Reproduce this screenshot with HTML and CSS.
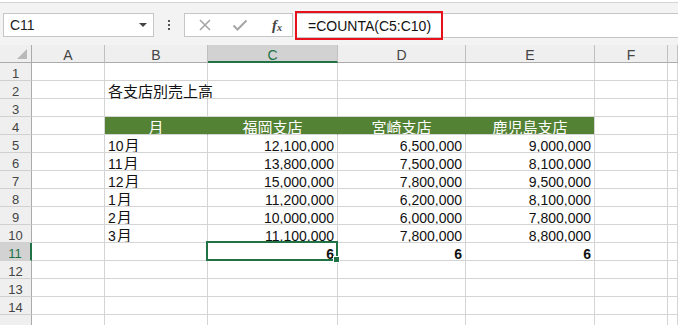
FILE: index.html
```html
<!DOCTYPE html>
<html lang="ja">
<head>
  <meta charset="UTF-8" />
  <title>COUNTA</title>
  <link rel="stylesheet" href="styles.css">
</head>
<body>
  <div class="formula-bar">
    <div class="name-box">
      <span>C11</span>
      <span class="caret"></span>
    </div>
    <div class="dots"><i></i><i></i><i></i></div>
    <div class="fx-buttons">
      <svg width="14" height="14" viewBox="0 0 14 14"><path d="M2 2 L12 12 M12 2 L2 12" stroke="#a6a6a6" stroke-width="1.6" fill="none"/></svg>
      <svg width="16" height="14" viewBox="0 0 16 14"><path d="M1.5 7.5 L5.5 11.5 L14.5 2.5" stroke="#a6a6a6" stroke-width="2" fill="none"/></svg>
      <span class="fx">f<sub>x</sub></span>
    </div>
    <div class="formula-input">
      <span>=COUNTA(C5:C10)</span>
      <div class="highlight"></div>
    </div>
  </div>

  <div class="sheet">
    <div class="corner"><span></span></div>
    <div class="col-head">A</div>
    <div class="col-head">B</div>
    <div class="col-head active">C</div>
    <div class="col-head">D</div>
    <div class="col-head">E</div>
    <div class="col-head">F</div>
    <div class="col-head"></div>

    <div class="row-head">1</div><div class="cell"></div><div class="cell"></div><div class="cell"></div><div class="cell"></div><div class="cell"></div><div class="cell"></div><div class="cell"></div>
    <div class="row-head">2</div><div class="cell"></div><div class="cell title">各支店別売上高</div><div class="cell"></div><div class="cell"></div><div class="cell"></div><div class="cell"></div><div class="cell"></div>
    <div class="row-head">3</div><div class="cell"></div><div class="cell"></div><div class="cell"></div><div class="cell"></div><div class="cell"></div><div class="cell"></div><div class="cell"></div>
    <div class="row-head">4</div><div class="cell"></div><div class="cell head">月</div><div class="cell head">福岡支店</div><div class="cell head">宮崎支店</div><div class="cell head last">鹿児島支店</div><div class="cell"></div><div class="cell"></div>
    <div class="row-head">5</div><div class="cell"></div><div class="cell">10<span class="jp">月</span></div><div class="cell num">12,100,000</div><div class="cell num">6,500,000</div><div class="cell num">9,000,000</div><div class="cell"></div><div class="cell"></div>
    <div class="row-head">6</div><div class="cell"></div><div class="cell">11<span class="jp">月</span></div><div class="cell num">13,800,000</div><div class="cell num">7,500,000</div><div class="cell num">8,100,000</div><div class="cell"></div><div class="cell"></div>
    <div class="row-head">7</div><div class="cell"></div><div class="cell">12<span class="jp">月</span></div><div class="cell num">15,000,000</div><div class="cell num">7,800,000</div><div class="cell num">9,500,000</div><div class="cell"></div><div class="cell"></div>
    <div class="row-head">8</div><div class="cell"></div><div class="cell">1<span class="jp">月</span></div><div class="cell num">11,200,000</div><div class="cell num">6,200,000</div><div class="cell num">8,100,000</div><div class="cell"></div><div class="cell"></div>
    <div class="row-head">9</div><div class="cell"></div><div class="cell">2<span class="jp">月</span></div><div class="cell num">10,000,000</div><div class="cell num">6,000,000</div><div class="cell num">7,800,000</div><div class="cell"></div><div class="cell"></div>
    <div class="row-head">10</div><div class="cell"></div><div class="cell">3<span class="jp">月</span></div><div class="cell num">11,100,000</div><div class="cell num">7,800,000</div><div class="cell num">8,800,000</div><div class="cell"></div><div class="cell"></div>
    <div class="row-head active">11</div><div class="cell"></div><div class="cell"></div><div class="cell num bold selected">6</div><div class="cell num bold">6</div><div class="cell num bold">6</div><div class="cell"></div><div class="cell"></div>
    <div class="row-head">12</div><div class="cell"></div><div class="cell"></div><div class="cell"></div><div class="cell"></div><div class="cell"></div><div class="cell"></div><div class="cell"></div>
    <div class="row-head">13</div><div class="cell"></div><div class="cell"></div><div class="cell"></div><div class="cell"></div><div class="cell"></div><div class="cell"></div><div class="cell"></div>
    <div class="row-head">14</div><div class="cell"></div><div class="cell"></div><div class="cell"></div><div class="cell"></div><div class="cell"></div><div class="cell"></div><div class="cell"></div>
    <div class="row-head partial"></div><div class="cell"></div><div class="cell"></div><div class="cell"></div><div class="cell"></div><div class="cell"></div><div class="cell"></div><div class="cell"></div>
  </div>
</body>
</html>
```

FILE: styles.css
```css
body {
  margin: 0;
  background: #fff;
  font-family: "Liberation Sans", "Noto Sans CJK JP", sans-serif;
  overflow: hidden;
}

.formula-bar {
  height: 43px;
  margin-top: 2px;
  border-top: 1px solid #d4d4d4;
  background: #f3f3f3;
  display: flex;
  align-items: flex-start;
  padding-top: 10px;
  box-sizing: border-box;
}

.name-box {
  margin-left: 3px;
  width: 151px;
  height: 24px;
  box-sizing: border-box;
  border: 1px solid #c6c6c6;
  background: #fff;
  display: flex;
  align-items: center;
  justify-content: space-between;
  padding: 0 6px 0 6px;
  font-size: 14px;
  color: #222;
}

.caret {
  width: 0;
  height: 0;
  border-left: 4px solid transparent;
  border-right: 4px solid transparent;
  border-top: 4px solid #444;
}

.dots {
  width: 30px;
  height: 24px;
  display: flex;
  flex-direction: column;
  align-items: center;
  justify-content: center;
  gap: 2px;
}

.dots i {
  width: 2px;
  height: 2px;
  background: #555;
}

.fx-buttons {
  width: 109px;
  height: 24px;
  box-sizing: border-box;
  border: 1px solid #c6c6c6;
  background: #fff;
  display: flex;
  align-items: center;
  padding-left: 13px;
  gap: 20px;
}

.fx {
  font-family: "Liberation Serif", serif;
  font-style: italic;
  font-weight: bold;
  font-size: 15px;
  color: #444;
  margin-left: 4px;
}

.fx sub {
  font-size: 10px;
  vertical-align: -1px;
}

.formula-input {
  position: relative;
  flex: 1;
  height: 25px;
  margin-left: 3px;
  box-sizing: border-box;
  border: 1px solid #c6c6c6;
  border-right: none;
  background: #fff;
  font-size: 14px;
  line-height: 24px;
  padding-left: 11px;
  color: #111;
}

.highlight {
  position: absolute;
  left: -2px;
  top: -3px;
  width: 148px;
  height: 29px;
  box-sizing: border-box;
  border: 2px solid #e8101a;
}

.sheet {
  display: grid;
  grid-template-columns: 32px 73px 103px 130px 128px 129px 73px 1fr;
  grid-auto-rows: 18px;
  font-size: 14px;
}

.sheet > div {
  box-sizing: border-box;
  border-right: 1px solid #d4d4d4;
  border-bottom: 1px solid #d4d4d4;
  line-height: 22px;
  white-space: nowrap;
  overflow: hidden;
}

.corner, .col-head {
  background: #efefef;
  border-bottom-color: #ababab !important;
}

.corner {
  position: relative;
  border-right-color: #ababab !important;
}

.corner span {
  position: absolute;
  right: 4px;
  bottom: 3px;
  width: 0;
  height: 0;
  border-left: 10px solid transparent;
  border-bottom: 10px solid #b9b9b9;
}

.col-head {
  text-align: center;
  color: #444;
  line-height: 21px !important;
  border-right-color: #c0c0c0 !important;
}

.col-head.active {
  background: #d2d2d2;
  color: #217346;
  border-bottom: 2px solid #217346 !important;
}

.row-head {
  background: #efefef;
  text-align: center;
  font-size: 13px;
  color: #444;
  border-right-color: #ababab !important;
  border-bottom-color: #d0d0d0 !important;
}

.row-head.active {
  background: #d2d2d2;
  color: #217346;
  border-right: 2px solid #217346 !important;
}

.cell {
  padding: 0 3px;
  color: #111;
}

.jp {
  font-size: 15px;
  margin-left: 1px;
}

.title {
  font-size: 15px;
  overflow: visible !important;
}

.head {
  background: #548235;
  color: #fff;
  font-size: 15px;
  text-align: center;
  border-right-color: #548235 !important;
}

.head.last {
  border-right-color: #d4d4d4 !important;
}

.num {
  text-align: right;
}

.bold {
  font-weight: bold;
}

.selected {
  position: relative;
  overflow: visible !important;
}

.selected::after {
  content: "";
  position: absolute;
  left: -2px;
  top: -2px;
  right: -1px;
  bottom: -1px;
  border: 2px solid #217346;
}

.selected::before {
  content: "";
  position: absolute;
  right: -3px;
  bottom: -3px;
  width: 5px;
  height: 5px;
  background: #217346;
  border: 1px solid #fff;
  z-index: 1;
}
```
